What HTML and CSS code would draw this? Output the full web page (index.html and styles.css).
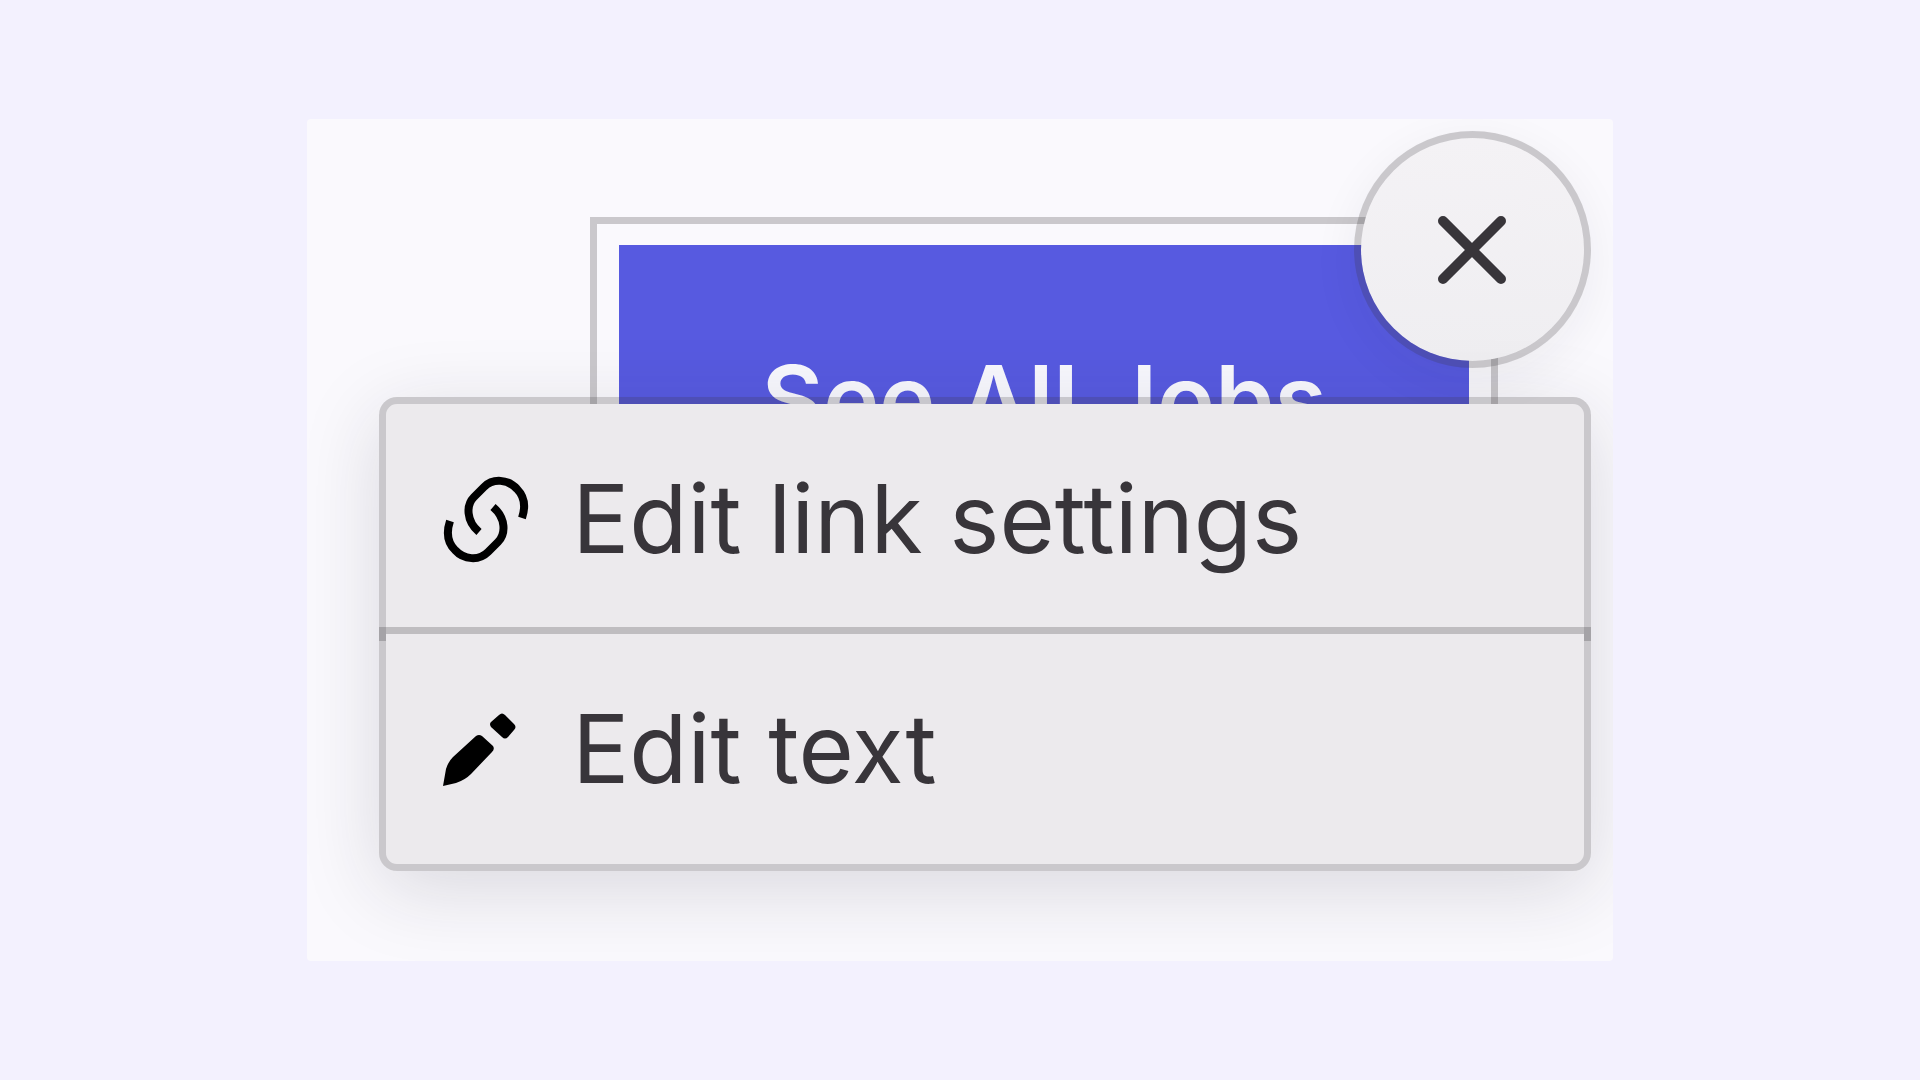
FILE: index.html
```
<!DOCTYPE html>
<html lang="en">
<head>
  <meta charset="utf-8">
  <meta name="viewport" content="width=device-width, initial-scale=1">
  <title>Edit button</title>
  <link rel="stylesheet" href="styles.css">
</head>
<body>
  <main class="card">
    <div class="selection">
      <a class="cta" href="#jobs">See All Jobs</a>
    </div>
    <button class="close" type="button" aria-label="Close">
      <svg class="close-icon" viewBox="0 0 70 70" aria-hidden="true">
        <path d="M6 6L64 64M64 6L6 64"/>
      </svg>
    </button>
    <div class="menu">
      <button class="menu-item" type="button">
        <svg class="icon icon-link" viewBox="0 0 86 87" aria-hidden="true">
          <path d="M79 42C83 30 82 21 74 13C65 3 50 2 41 11L31 21C23 29 23 45 36 56"/>
          <path d="M7 45C3 57 4 66 12 74C21 84 36 85 45 76L55 66C63 58 63 42 50 31"/>
        </svg>
        <span>Edit link settings</span>
      </button>
      <button class="menu-item" type="button">
        <svg class="icon" viewBox="0 0 86 87" aria-hidden="true">
          <path d="M0 80L3 63Q5 56 10 51L33 30Q36 28 39 30L50 40Q52 43 49 46L28 68Q22 74 13 77Z"/>
          <path d="M56 9Q59 6 62 9L71 18Q74 21 71 24L65 31Q62 34 59 31L48 21Q46 18 48 16Z"/>
        </svg>
        <span>Edit text</span>
      </button>
    </div>
  </main>
</body>
</html>
```
FILE: styles.css
```
* {
  box-sizing: border-box;
}

body {
  --line: rgba(50, 44, 52, 0.24);
  margin: 0;
  min-height: 100vh;
  display: flex;
  align-items: center;
  justify-content: center;
  background: #f3f1fe;
  color: #38353a;
  font-family: Inter, "Liberation Sans", sans-serif;
}

.card {
  position: relative;
  width: 68%;
  padding: 98px 22px 90px 72px;
  border-radius: 4px;
  overflow: hidden;
  background: #faf9fd;
}

.selection {
  margin: 0 93px 0 211px;
  padding: 21px 22px;
  border: 7px solid var(--line);
}

.cta {
  display: block;
  padding: 100px 0;
  background: #575ae0;
  color: #f8f8fe;
  font-size: 95px;
  font-weight: 600;
  line-height: 110px;
  text-align: center;
  text-decoration: none;
  white-space: nowrap;
}

.close {
  position: absolute;
  top: 12px;
  right: 22px;
  width: 237px;
  height: 237px;
  padding: 0;
  display: grid;
  place-items: center;
  border: 7px solid var(--line);
  border-radius: 50%;
  background: linear-gradient(#f4f2f5, #efeef1) padding-box;
  box-shadow: 0 12px 48px rgba(40, 34, 50, 0.06);
}

.close-icon {
  width: 70px;
  height: 70px;
  fill: none;
  stroke: #38353a;
  stroke-width: 10;
  stroke-linecap: round;
}

.menu {
  position: relative;
  margin-top: -186px;
  border-radius: 18px;
  box-shadow: 0 18px 80px rgba(36, 32, 48, 0.15);
}

.menu-item {
  width: 100%;
  height: 244px;
  padding: 0 57px;
  display: flex;
  align-items: center;
  gap: 43px;
  border: 7px solid var(--line);
  background: #eceaed padding-box;
  color: inherit;
  font: inherit;
  font-size: 95px;
  line-height: 116px;
  text-align: left;
  white-space: nowrap;
}

.menu-item:first-child {
  border-radius: 18px 18px 0 0;
}

.menu-item:last-child {
  margin-top: -14px;
  border-radius: 0 0 18px 18px;
}

.icon {
  flex: none;
  width: 86px;
  height: 87px;
  fill: #000;
}

.icon-link {
  fill: none;
  stroke: #000;
  stroke-width: 8;
}
```
